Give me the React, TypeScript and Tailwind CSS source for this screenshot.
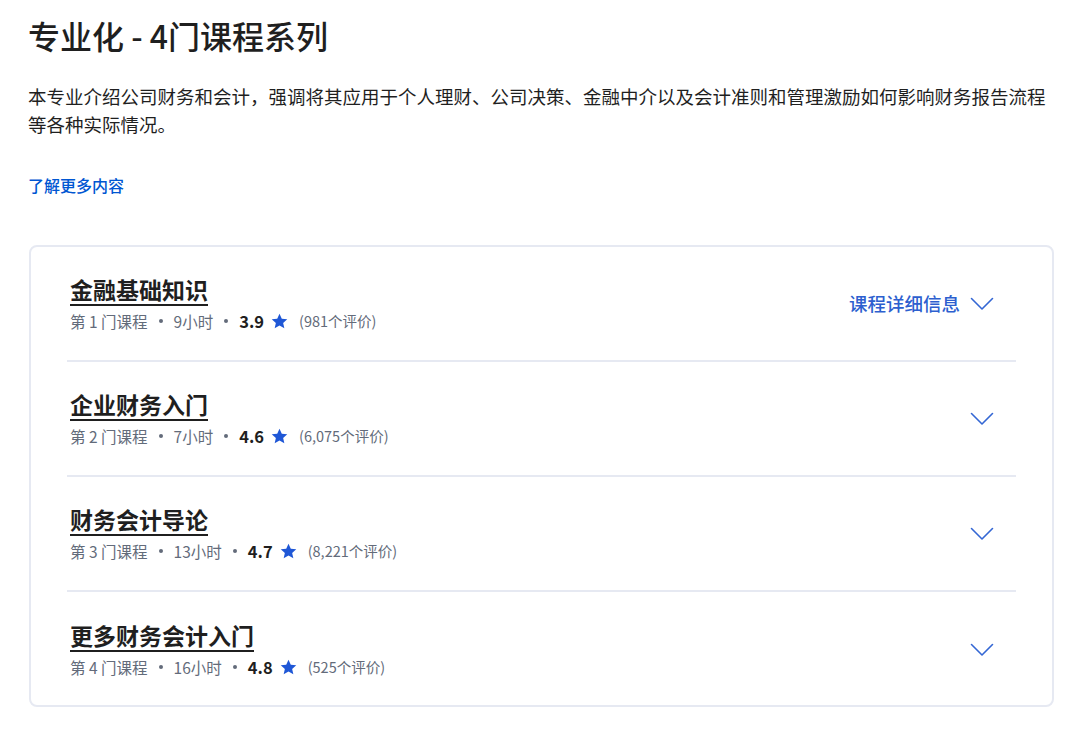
import * as React from "react";

const courses = [
  { n: 1, title: "金融基础知识", hours: "9小时", rating: "3.9", reviews: "981", detail: true },
  { n: 2, title: "企业财务入门", hours: "7小时", rating: "4.6", reviews: "6,075", detail: false },
  { n: 3, title: "财务会计导论", hours: "13小时", rating: "4.7", reviews: "8,221", detail: false },
  { n: 4, title: "更多财务会计入门", hours: "16小时", rating: "4.8", reviews: "525", detail: false },
];

const Chevron = () => (
  <svg width="24" height="14" viewBox="0 0 24 14" fill="none" className="text-[#3467d4]">
    <path d="M1.5 1.5 L12 12 L22.5 1.5" stroke="currentColor" strokeWidth="1.6" strokeLinecap="round" strokeLinejoin="round" />
  </svg>
);

const Star = () => (
  <svg width="19" height="19" viewBox="0 0 24 24" className="text-[#1f57d6]">
    <path d="M12 2.2l2.9 6.3 6.9.7-5.2 4.6 1.5 6.8L12 17.1l-6.1 3.5 1.5-6.8-5.2-4.6 6.9-.7z" fill="currentColor" />
  </svg>
);

const Dot = () => <span className="mx-[11px] w-[4px] h-[4px] rounded-full bg-[#636b7a] inline-block" />;

// 专业化课程系列
export default function App() {
  return (
    <div
      className="w-[1080px] h-[745px] bg-white text-[#1f1f1f] overflow-hidden px-7 pt-[14px]"
      style={{ fontFamily: '"Noto Sans CJK SC", "Noto Sans", sans-serif' }}
    >
      <h1 className="text-[32px] font-medium leading-[42px]">专业化 - 4门课程系列</h1>
      <p className="mt-[26px] w-[1024px] text-[18.5px] leading-[28px] text-[#1f1f1f]">
        本专业介绍公司财务和会计，强调将其应用于个人理财、公司决策、金融中介以及会计准则和管理激励如何影响财务报告流程等各种实际情况。
      </p>
      <a className="block mt-[36px] text-[16px] font-medium text-[#0056d2] leading-[22px]">了解更多内容</a>

      {/* 课程列表 */}
      <div className="mt-[49px] ml-px w-[1025px] h-[462px] border-2 border-[#e6e9f2] rounded-lg px-[36px]">
        {courses.map((c, i) => (
          <div
            key={c.n}
            className={
              "flex items-center h-[115px] pl-[3px] pr-[22px] " +
              (i < courses.length - 1 ? "border-b-2 border-[#e6e9f2]" : "")
            }
          >
            <div className="flex-1">
              <div className="text-[23px] font-bold leading-[30px] underline underline-offset-[5px] decoration-[2px]">
                {c.title}
              </div>
              <div className="flex items-center mt-[5px] text-[15.5px] text-[#636b7a] leading-[24px]">
                <span>第 {c.n} 门课程</span>
                <Dot />
                <span>{c.hours}</span>
                <Dot />
                <span className="text-[16.5px] font-bold text-[#1f1f1f]">{c.rating}</span>
                <span className="ml-[6px] mr-[10px]"><Star /></span>
                <span className="text-[14.5px]">({c.reviews}个评价)</span>
              </div>
            </div>
            {c.detail && (
              <span className="mr-[10px] text-[18.5px] font-medium text-[#2d5fcf]">课程详细信息</span>
            )}
            <Chevron />
          </div>
        ))}
      </div>
    </div>
  );
}
